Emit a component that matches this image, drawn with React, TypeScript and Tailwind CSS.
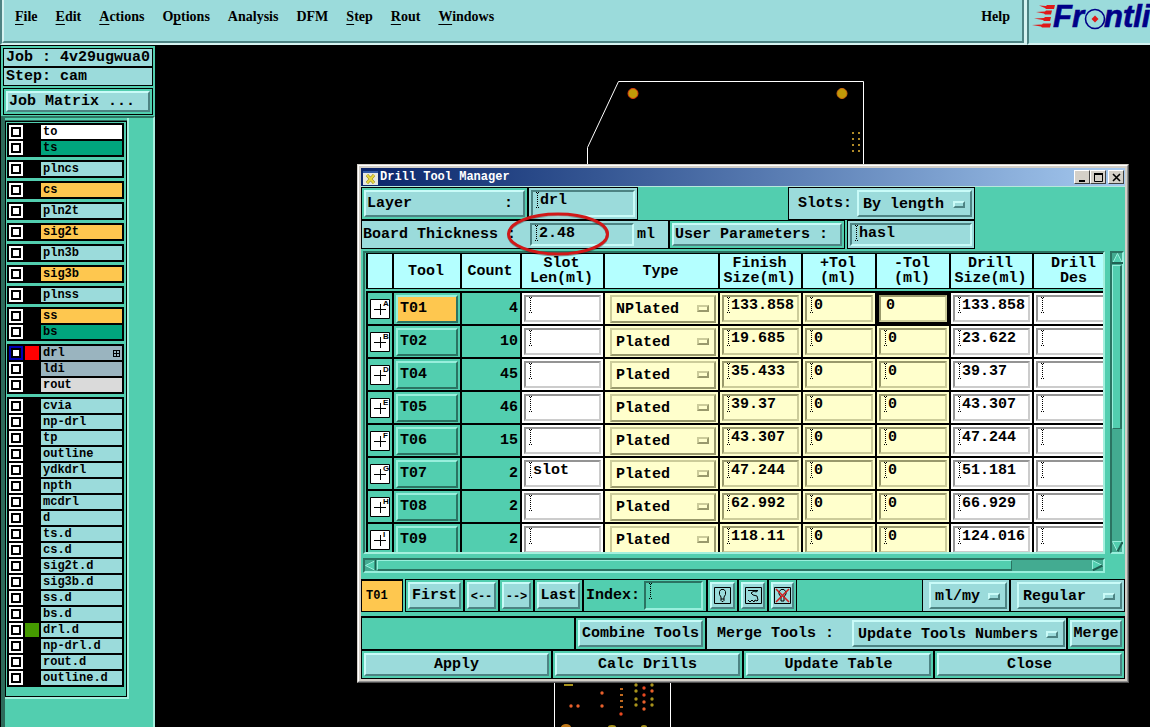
import React from "react";

const MONO = "font-['Liberation_Mono',monospace] font-bold";
const RAISED = "border-2 border-t-[#c9fbf8] border-l-[#c9fbf8] border-b-[#4d8383] border-r-[#4d8383] bg-[#9bdbdb]";
const RAISED_GREEN = "border-2 border-t-[#98efdc] border-l-[#98efdc] border-b-[#2b7362] border-r-[#2b7362] bg-[#52ceaf]";
const RAISED_YELLOW = "border-2 border-t-[#cccc9a] border-l-[#cccc9a] border-b-[#99996c] border-r-[#99996c] bg-[#ffffcc]";
const SUNK = "border-2 border-t-[#4d8383] border-l-[#4d8383] border-b-[#c9fbf8] border-r-[#c9fbf8] bg-[#9bdbdb]";
const SUNK_GREEN = "border-2 border-t-[#2b7362] border-l-[#2b7362] border-b-[#98efdc] border-r-[#98efdc] bg-[#52ceaf]";
const SUNK_WHITE = "border-2 border-t-[#949494] border-l-[#949494] border-b-[#cccccc] border-r-[#cccccc] bg-white";
const SUNK_YELLOW = "border-2 border-t-[#99996c] border-l-[#99996c] border-b-[#cccc9a] border-r-[#cccc9a] bg-[#ffffcc]";

type Layer = { name: string; bg: string; swatch?: string; active?: boolean };

const CYAN = "bg-[#9bdbdb]";
const ORANGE = "bg-[#fec74f]";
const GREEN = "bg-[#00a57d]";
const SLATE = "bg-[#9ab4bf]";

const layerGroups: Layer[][] = [
  [{ name: "to", bg: "bg-white" }, { name: "ts", bg: GREEN }],
  [{ name: "plncs", bg: CYAN }],
  [{ name: "cs", bg: ORANGE }],
  [{ name: "pln2t", bg: CYAN }],
  [{ name: "sig2t", bg: ORANGE }],
  [{ name: "pln3b", bg: CYAN }],
  [{ name: "sig3b", bg: ORANGE }],
  [{ name: "plnss", bg: CYAN }],
  [{ name: "ss", bg: ORANGE }, { name: "bs", bg: GREEN }],
  [
    { name: "drl", bg: SLATE, swatch: "bg-[#ff0000]", active: true },
    { name: "ldi", bg: SLATE },
    { name: "rout", bg: "bg-[#dadada]" },
  ],
  [
    "cvia", "np-drl", "tp", "outline", "ydkdrl", "npth", "mcdrl", "d", "ts.d", "cs.d", "sig2t.d",
    "sig3b.d", "ss.d", "bs.d", "drl.d", "np-drl.d", "rout.d", "outline.d",
  ].map((name) => ({ name, bg: CYAN, swatch: name === "drl.d" ? "bg-[#459a00]" : undefined })),
];

const menus: [string, string, string][] = [
  ["", "F", "ile"],
  ["", "E", "dit"],
  ["", "A", "ctions"],
  ["O", "p", "tions"],
  ["Analysis", "", ""],
  ["DFM", "", ""],
  ["", "S", "tep"],
  ["", "R", "out"],
  ["", "W", "indows"],
];

const tools = [
  { id: "T01", mark: "A", count: 4, slot: "", type: "NPlated", finish: "133.858", drill: "133.858" },
  { id: "T02", mark: "B", count: 10, slot: "", type: "Plated", finish: "19.685", drill: "23.622" },
  { id: "T04", mark: "D", count: 45, slot: "", type: "Plated", finish: "35.433", drill: "39.37" },
  { id: "T05", mark: "E", count: 46, slot: "", type: "Plated", finish: "39.37", drill: "43.307" },
  { id: "T06", mark: "F", count: 15, slot: "", type: "Plated", finish: "43.307", drill: "47.244" },
  { id: "T07", mark: "G", count: 2, slot: "slot", type: "Plated", finish: "47.244", drill: "51.181" },
  { id: "T08", mark: "H", count: 2, slot: "", type: "Plated", finish: "62.992", drill: "66.929" },
  { id: "T09", mark: "I", count: 2, slot: "", type: "Plated", finish: "118.11", drill: "124.016" },
];

const columns: [string, string][] = [
  ["", "w-[26px]"],
  ["Tool", "w-[68px]"],
  ["Count", "w-[60px]"],
  ["Slot\nLen(ml)", "w-[83px]"],
  ["Type", "w-[115px]"],
  ["Finish\nSize(ml)", "w-[83px]"],
  ["+Tol\n(ml)", "w-[74px]"],
  ["-Tol\n(ml)", "w-[74px]"],
  ["Drill\nSize(ml)", "w-[83px]"],
  ["Drill\nDes", "w-[83px]"],
];

function Caret() {
  return (
    <svg width="5" height="16" viewBox="0 0 5 16" className="shrink-0" aria-hidden="true" shapeRendering="crispEdges">
      <path d="M2.500 1V15" stroke="#000" strokeDasharray="1 1" />
      <path d="M1 0h1v1H1zM3 0h1v1H3zM1 15h1v1H1zM3 15h1v1H3z" />
    </svg>
  );
}

function Field({ label, value, look, caret = true, className = "" }: {
  label: string; value: string; look: string; caret?: boolean; className?: string;
}) {
  return (
    <div className={`flex min-w-0 items-start pl-[2px] ${look} ${className}`}>
      {caret ? <Caret /> : <span className="w-[3px] shrink-0" />}
      <input
        aria-label={label}
        defaultValue={value}
        className="h-[17px] w-full min-w-0 bg-transparent text-[15px] leading-[17px] outline-none"
      />
    </div>
  );
}

function Dropdown({ label, options, look, mark, className = "" }: {
  label: string; options: string[]; look: string; mark: string; className?: string;
}) {
  return (
    <div className={`grid items-center ${look} ${className}`}>
      <select
        aria-label={label}
        className="col-start-1 row-start-1 h-full w-full min-w-0 appearance-none bg-transparent pt-[2px] pl-1 text-[15px] outline-none"
      >
        {options.map((o) => <option key={o}>{o}</option>)}
      </select>
      <span className={`pointer-events-none col-start-1 row-start-1 mr-[5px] h-[7px] w-3 justify-self-end ${mark}`} />
    </div>
  );
}

const MARK_CYAN = "border-2 border-t-[#c9fbf8] border-l-[#c9fbf8] border-b-[#4d8383] border-r-[#4d8383]";
const MARK_YELLOW = "border-2 border-t-[#cccc9a] border-l-[#cccc9a] border-b-[#99996c] border-r-[#99996c]";

function Boxed({ className = "", children }: { className?: string; children?: React.ReactNode }) {
  return <div className={`flex border border-black bg-[#52ceaf] p-[2px] ${className}`}>{children}</div>;
}

function Btn({ children, className = "", label }: { children: React.ReactNode; className?: string; label?: string }) {
  return (
    <button type="button" aria-label={label} className={`flex min-w-0 flex-1 items-center justify-center pt-[2px] whitespace-pre ${RAISED} ${className}`}>
      {children}
    </button>
  );
}

function Logo() {
  return (
    <svg width="121" height="41" viewBox="1029 0 121 41" role="img" aria-label="Frontline">
      <g fill="#e01818">
        <path d="M1039 5.500l7 .5 1-1h8l-1 4h-8l-1-1z" />
        <path d="M1036 12l9-.5 1-1h6l-1 4h-6l-1-1z" />
        <path d="M1034 18.500l10-.5 1-1h6l-1 4h-6l-1-1z" />
        <path d="M1032 25l10-.5 1-1h8l-1 4h-8l-1-1z" />
      </g>
      <g fill="#000088" stroke="#000088" strokeWidth=".6" className="font-['Liberation_Sans',sans-serif] text-[31px] font-bold italic">
        <text x="1053" y="27">Fr</text>
        <text x="1104" y="27">ntli</text>
      </g>
      <circle cx="1095" cy="19" r="9.500" fill="none" stroke="#000088" strokeWidth="1.600" />
      <path d="M1095 15.500l3.500 3.500-3.500 3.500-3.500-3.500z" fill="#e01818" />
    </svg>
  );
}

function LayerRow({ layer }: { layer: Layer }) {
  return (
    <label className="flex h-[14px] gap-[2px]">
      <input
        type="checkbox"
        className={`size-[14px] shrink-0 appearance-none border-2 bg-white shadow-[inset_0_0_0_2px_#000] ${layer.active ? "border-[#0000b4]" : "border-white"}`}
      />
      <span className={`w-[14px] shrink-0 ${layer.swatch ?? "bg-black"}`} />
      <span className={`flex flex-1 items-center justify-between pr-[1px] pl-[2px] text-[12px] leading-[14px] ${layer.bg}`}>
        {layer.name}
        {layer.active && (
          <svg width="7" height="7" viewBox="0 0 7 7" className="mr-px" aria-hidden="true" shapeRendering="crispEdges">
            <path d="M0 0h7v7H0zM1 1v2h2V1zM4 1v2h2V1zM1 4v2h2V4zM4 4v2h2V4z" fillRule="evenodd" />
          </svg>
        )}
      </span>
    </label>
  );
}

function Sidebar() {
  return (
    <aside className={`flex w-[155px] shrink-0 flex-col border-l border-black bg-[#52ceaf] ${MONO}`}>
      <div className="border-t border-black px-[2px] pt-[2px] pb-[1px] text-[15px]">
        <div className="flex h-[19px] items-center border border-black bg-[#9bdbdb] pt-[2px] pl-[2px] whitespace-pre">Job : 4v29ugwua0</div>
        <div className="flex h-[19px] items-center border border-black bg-[#9bdbdb] pt-[2px] pl-[2px] whitespace-pre">Step: cam</div>
        <div className="mt-[2px] flex h-[27px] border border-black p-[2px]">
          <button type="button" className={`flex-1 pl-[1px] text-left leading-[18px] whitespace-pre ${RAISED}`}>Job Matrix ...</button>
        </div>
      </div>
      <div className="flex flex-1 border-t-2 border-r-2 border-l-4 border-t-[#2e7563] border-r-[#a5f0de] border-l-[#2e6b5b]">
        <div className="self-start border-r-2 border-b-2 border-[#a5f0de]">
          <div className="mt-[2px] border-t border-[#2e6b5b]">
            <div className="flex w-[122px] flex-col gap-[3px] border border-black pt-[1px] pr-[2px] pb-[9px] pl-[1px]">
              {layerGroups.map((group) => (
                <div key={group[0].name} className="flex flex-col gap-[2px] bg-black p-[2px]">
                  {group.map((layer) => <LayerRow key={layer.name} layer={layer} />)}
                </div>
              ))}
            </div>
          </div>
        </div>
      </div>
    </aside>
  );
}

const pads: [number, number, string][] = [
  [571, 706, "#e8602c"], [578, 706, "#e8602c"], [602, 693, "#e8602c"], [602, 706, "#e8602c"],
  [636, 685, "#a8931c"], [636, 691, "#a8931c"], [636, 699, "#a8931c"], [636, 705, "#a8931c"],
  [644, 688, "#e84820"], [644, 695, "#e84820"], [644, 702, "#e8602c"], [644, 709, "#e8602c"],
  [652, 685, "#a8931c"], [652, 691, "#e8602c"], [652, 699, "#a8931c"], [652, 705, "#a8931c"],
  [621, 714, "#e84820"],
];

function BoardDrawing() {
  return (
    <svg width="995" height="682" viewBox="155 45 995 682" className="absolute top-0 left-0" aria-hidden="true">
      <path d="M587.500 170V147.500L618.500 81.500H863.500V170M554.500 680V727M670.500 680V727" fill="none" stroke="#fff" />
      <circle cx="633" cy="93.500" r="5" fill="#c09a08" stroke="#e03a10" />
      <circle cx="842" cy="93.500" r="5" fill="#c09a08" stroke="#d06a10" />
      {[133, 139, 145, 151].map((y) => (
        <path key={y} d={`M852 ${y}h2M858 ${y}h2`} stroke="#b08a28" strokeWidth="2" />
      ))}
      {[689, 695, 701, 707].map((y) => <path key={y} d={`M620 ${y}h3`} stroke="#c06a20" strokeWidth="2" />)}
      {pads.map(([x, y, fill]) => <circle key={`${x}-${y}`} cx={x} cy={y} r="1.700" fill={fill} />)}
      <path d="M564 685h9" stroke="#a8931c" strokeWidth="2" />
      <ellipse cx="566" cy="727" rx="5" ry="3" fill="#c07818" />
      <ellipse cx="612" cy="727" rx="4" ry="2" fill="#a8931c" />
      <ellipse cx="644" cy="727" rx="3" ry="2" fill="#a8931c" />
    </svg>
  );
}

function ToolMark({ mark }: { mark: string }) {
  return (
    <svg width="20" height="20" viewBox="0 0 20 20" className="mx-auto" role="img" aria-label={`Symbol ${mark}`}>
      <path d="M.5.5h19v19H.5z" fill="#fff" stroke="#000" />
      <path d="M10.500 5v11M4 10.500h12" stroke="#000" />
      <text x="13" y="7" className="font-['Liberation_Sans',sans-serif] text-[8px] font-bold">{mark}</text>
    </svg>
  );
}

function ToolTable() {
  const cell = "h-[33px] border-t-2 border-l-2 border-black p-0";
  return (
    <table className="w-[749px] table-fixed border-separate border-spacing-0">
      <thead>
        <tr>
          {columns.map(([text, width], i) => (
            <th key={i} className={`p-0 pb-[2px] ${width}`}>
              <div className="flex h-9 items-center justify-center border-t border-b border-l-2 border-black bg-[#b4ffff] pr-[2px] text-[15px] leading-[15px] whitespace-pre">
                {text}
              </div>
            </th>
          ))}
        </tr>
      </thead>
      <tbody>
        {tools.map((t, i) => (
          <tr key={t.id}>
            <td className={cell}><ToolMark mark={t.mark} /></td>
            <td className={cell}>
              <button type="button" className={`mx-[2px] flex h-7 w-[62px] items-center pt-[2px] pl-[2px] ${RAISED_GREEN} ${i === 0 ? "bg-[#fec74f]!" : ""}`}>
                {t.id}
              </button>
            </td>
            <td className={`${cell} pt-[2px]! pr-[2px]! text-right`}>{t.count}</td>
            <td className={`${cell} bg-white`}>
              <Field label={`${t.id} slot length`} value={t.slot} look={SUNK_WHITE} className="mx-[2px] h-[27px]" />
            </td>
            <td className={`${cell} bg-[#ffffcc]`}>
              <Dropdown label={`${t.id} type`} options={[t.type]} look={RAISED_YELLOW} mark={MARK_YELLOW} className="mr-[2px] ml-[5px] h-7" />
            </td>
            <td className={`${cell} bg-[#ffffcc]`}>
              <Field label={`${t.id} finish size`} value={t.finish} look={SUNK_YELLOW} className="mx-[2px] h-[27px]" />
            </td>
            <td className={`${cell} bg-[#ffffcc]`}>
              <Field label={`${t.id} plus tolerance`} value="0" look={SUNK_YELLOW} className="mx-[2px] h-[27px]" />
            </td>
            <td className={`${cell} ${i === 0 ? "bg-black" : "bg-[#ffffcc]"}`}>
              <Field label={`${t.id} minus tolerance`} value="0" look={SUNK_YELLOW} caret={i !== 0} className="mx-[2px] h-[27px]" />
            </td>
            <td className={`${cell} bg-white`}>
              <Field label={`${t.id} drill size`} value={t.drill} look={SUNK_WHITE} className="mx-[2px] h-[27px]" />
            </td>
            <td className={`${cell} bg-white`}>
              <Field label={`${t.id} drill designation`} value="" look={SUNK_WHITE} className="mx-[2px] h-[27px]" />
            </td>
          </tr>
        ))}
      </tbody>
    </table>
  );
}

function Arrow({ points, shade }: { points: string; shade: string }) {
  return (
    <svg width="11" height="11" viewBox="0 0 11 11" className="shrink-0" aria-hidden="true">
      <polygon points={points} fill="#52ceaf" stroke="#98efdc" strokeWidth="1" />
      <path d={shade} stroke="#1f6152" strokeWidth="2" fill="none" />
    </svg>
  );
}

function TitleBar() {
  const btn = "flex h-[14px] w-[16px] items-center justify-center border border-t-white border-l-white border-r-[#404040] border-b-[#404040] bg-[#d4d0c8]";
  return (
    <div className="flex h-[18px] items-center bg-linear-to-r from-[#0a246a] to-[#a6caf0] pr-[1px] pl-[2px] text-white">
      <svg width="15" height="15" viewBox="0 0 15 15" aria-hidden="true">
        <path d="M0 1h15v14H0z" fill="#e8e8e0" />
        <path d="M0 1h15v2H0z" fill="#3058a8" />
        <path d="M4 5l7 8M11 5l-7 8" stroke="#8a7a18" strokeWidth="3" />
        <path d="M4 5l7 8M11 5l-7 8" stroke="#e8d840" strokeWidth="2" />
      </svg>
      <h1 className="flex-1 pl-[2px] text-[12px] leading-[18px]">Drill Tool Manager</h1>
      <button type="button" aria-label="Minimize" className={btn}>
        <svg width="9" height="9" viewBox="0 0 9 9"><path d="M1 7h6v2H1z" /></svg>
      </button>
      <button type="button" aria-label="Maximize" className={btn}>
        <svg width="9" height="9" viewBox="0 0 9 9"><path d="M.5 1v7.500h8V1M0 1h9" fill="none" stroke="#000" /><path d="M0 0h9v2H0z" /></svg>
      </button>
      <button type="button" aria-label="Close window" className={`${btn} ml-[2px]`}>
        <svg width="9" height="9" viewBox="0 0 9 9"><path d="M1 1l7 7M8 1L1 8" stroke="#000" strokeWidth="1.600" /></svg>
      </button>
    </div>
  );
}

function DrillDialog() {
  return (
    <section
      aria-label="Drill Tool Manager"
      className={`absolute top-[119px] right-[21px] left-[202px] min-w-[772px] border border-t-[#d4d0c8] border-l-[#d4d0c8] border-r-[#505050] border-b-[#505050] bg-[#d4d0c8] text-[15px] text-black ${MONO}`}
    >
      <div className="border border-t-white border-r-[#909090] border-b-[#909090] border-l-white p-[2px]">
        <TitleBar />
        <div className="border-t border-[#b8e8dc] bg-[#52ceaf]">
          <div className="flex h-[33px]">
            <Boxed className="w-[167px]">
              <Btn className="justify-between! pr-[10px] pl-[1px]"><span>Layer</span><span>:</span></Btn>
            </Boxed>
            <div className="flex w-[110px] border border-black bg-[#9bdbdb] p-[2px]">
              <Field label="Layer name" value="drl" look={SUNK} className="flex-1" />
            </div>
            <div className="mr-[150px] ml-auto flex w-[187px] items-center border border-black bg-[#9bdbdb] py-[2px] pr-[2px] pl-[9px]">
              <span className="flex-1 pt-[2px]">Slots:</span>
              <Dropdown label="Slots" options={["By length"]} look={RAISED} mark={MARK_CYAN} className="h-full w-[115px]" />
            </div>
          </div>
          <div className="flex h-[29px]">
            <div className="flex w-[308px] items-center border border-black bg-[#9bdbdb] py-[2px] pr-[12px] pl-[1px]">
              <label htmlFor="board-thickness" className="w-[167px] pt-[2px] whitespace-pre">Board Thickness :</label>
              <div className={`flex h-full w-[104px] items-start pl-[2px] ${SUNK}`}>
                <Caret />
                <input
                  id="board-thickness"
                  defaultValue="2.48"
                  className="h-[17px] w-full min-w-0 bg-transparent text-[15px] leading-[17px] outline-none"
                />
              </div>
              <span className="flex-1 pt-[2px] pl-[3px]">ml</span>
            </div>
            <Boxed className="w-[176px]"><Btn className="justify-start! pl-[1px]">User Parameters :</Btn></Boxed>
            <div className="mr-[150px] ml-auto flex w-[128px] border border-black bg-[#9bdbdb] p-[2px]">
              <Field label="User parameter" value="hasl" look={SUNK} className="flex-1" />
            </div>
          </div>

          <div className="mt-[2px] flex gap-[5px] pr-[1px] pl-[2px]">
            <div className="h-[303px] min-w-0 flex-1 overflow-hidden border-2 border-t-[#2b7362] border-r-[#a5f0de] border-b-[#a5f0de] border-l-[#2b7362] pl-[1px]">
              <ToolTable />
            </div>
            <div className="flex h-[303px] w-[14px] flex-col items-center border-2 border-t-[#2b7362] border-r-[#98efdc] border-b-[#98efdc] border-l-[#2b7362] bg-[#43ab91]">
              <Arrow points="5.5,0.5 10.500,10.500 0.500,10.500" shade="M0 10h11" />
              <div className="mt-[1px] h-[164px] w-full shrink-0 border border-r-2 border-t-[#98efdc] border-r-[#2b7362] border-b-[#2b7362] border-l-[#98efdc] bg-[#52ceaf]" />
              <div className="flex-1" />
              <Arrow points="0.5,0.500 10.500,0.500 5.500,10.500" shade="M10.500 1L5.500 10.500" />
            </div>
          </div>

          <div className="mt-1 pr-[20px] pl-[2px]">
            <div className="flex h-[15px] items-center border-2 border-t-[#2b7362] border-r-[#98efdc] border-b-[#98efdc] border-l-[#2b7362] bg-[#43ab91]">
              <Arrow points="10.5,0.500 10.500,10.500 0.500,5.500" shade="M10.500 0V10.500" />
              <div className="ml-[1px] h-full w-[86%] border border-b-2 border-t-[#98efdc] border-r-[#2b7362] border-b-[#2b7362] border-l-[#98efdc] bg-[#52ceaf]" />
              <div className="flex-1" />
              <Arrow points="0.5,0.500 10.500,5.500 0.500,10.500" shade="M0.500 10.500L10.500 5.500" />
            </div>
          </div>

          <div className="mt-[6px] flex h-[33px]">
            <div className="mr-[2px] flex w-[42px] items-center border border-t-2 border-black bg-[#fec74f] pl-[4px] text-[12px]">T01</div>
            <Boxed className="w-[59px]"><Btn>First</Btn></Boxed>
            <Boxed className="w-[35px]"><Btn label="Previous" className="text-[12px]">&lt;--</Btn></Boxed>
            <Boxed className="w-[35px]"><Btn label="Next" className="text-[12px]">--&gt;</Btn></Boxed>
            <Boxed className="w-[49px]"><Btn>Last</Btn></Boxed>
            <div className="flex w-[124px] items-center border border-black py-[1px] pr-[3px] pl-[2px]">
              <span className="w-[58px] pt-[2px]">Index:</span>
              <Field label="Index" value="" look={SUNK_GREEN} className="h-full flex-1" />
            </div>
            <Boxed className="w-[31px]">
              <Btn label="Highlight" className="pt-0!">
                <svg width="17" height="17" viewBox="0 0 17 17" fill="none" stroke="#000" className="shrink-0">
                  <path d="M.5.5h16v16H.5z" />
                  <path d="M7 12V10L5.500 7.500V4.500L7 2.500h3l1.500 2v3L10 10v2zM7 12v1.500l1 1h1l1-1V12" />
                </svg>
              </Btn>
            </Boxed>
            <Boxed className="w-[30px]">
              <Btn label="Path" className="pt-0!">
                <svg width="17" height="17" viewBox="0 0 17 17" fill="none" stroke="#000" className="shrink-0">
                  <path d="M.5.5h16v16H.5z" />
                  <path d="M3 3.500h10L11 5l-2-1-3 2 2 2 4 1 1 4-1 1-2-1-1 2-2-2-2 2-2-2" />
                </svg>
              </Btn>
            </Boxed>
            <Boxed className="w-[29px]">
              <Btn label="Clear highlight" className="pt-0!">
                <svg width="17" height="17" viewBox="0 0 17 17" fill="none" stroke="#000" className="shrink-0">
                  <path d="M.5.5h16v16H.5z" />
                  <path d="M7 12V10L5 7V5l2-2.500h3L12 5v2l-2 3v4H7z" />
                  <path d="M2 2l13 13M15 2L2 15" stroke="#d02020" strokeWidth="1.600" />
                </svg>
              </Btn>
            </Boxed>
            <div className="min-w-0 flex-1 border-t border-b border-black" />
            <div className="w-[88px] border border-black bg-[#9bdbdb] py-[2px] pr-[2px] pl-[6px]">
              <Dropdown label="Units" options={["ml/my"]} look={RAISED} mark={MARK_CYAN} className="h-full" />
            </div>
            <div className="w-[115px] border border-black bg-[#9bdbdb] py-[2px] pr-[2px] pl-[6px]">
              <Dropdown label="Mode" options={["Regular"]} look={RAISED} mark={MARK_CYAN} className="h-full" />
            </div>
          </div>

          <div className="mt-1 flex h-[34px] border-t border-black">
            <div className="min-w-0 flex-1 border border-black" />
            <Boxed className="w-[131px]"><Btn>Combine Tools</Btn></Boxed>
            <div className="flex w-[361px] items-center border border-black bg-[#9bdbdb] py-[2px] pr-[1px] pl-[10px]">
              <span className="flex-1 pt-[2px] whitespace-pre">Merge Tools :</span>
              <Dropdown label="Merge Tools" options={["Update Tools Numbers"]} look={RAISED} mark={MARK_CYAN} className="h-full w-[213px]" />
            </div>
            <Boxed className="w-[58px]"><Btn>Merge</Btn></Boxed>
          </div>
          <div className="flex h-[29px]">
            {["Apply", "Calc Drills", "Update Table", "Close"].map((text) => (
              <Boxed key={text} className="flex-1"><Btn>{text}</Btn></Boxed>
            ))}
          </div>
        </div>
      </div>
      <svg width="104" height="46" viewBox="0 0 104 46" className="pointer-events-none absolute top-[46px] left-[148px]" aria-hidden="true">
        <ellipse cx="52" cy="24" rx="49.500" ry="20" fill="none" stroke="#000" strokeOpacity="0.300" strokeWidth="3" />
        <ellipse cx="52" cy="23" rx="49.500" ry="20" fill="none" stroke="#d01818" strokeWidth="3" />
      </svg>
    </section>
  );
}

export default function App() {
  return (
    <div className="flex h-screen min-h-[727px] flex-col overflow-hidden bg-black text-black">
      <header className="flex h-[45px] shrink-0">
        <div className="flex min-w-0 flex-1 border-r-[3px] border-b-2 border-l-2 border-r-[#d5f3f1] border-b-[#d5f3f1] border-l-[#4d8383]">
          <nav className="flex flex-1 items-start gap-[18px] border-r-2 border-b-2 border-l-2 border-r-[#4d8383] border-b-[#4d8383] border-l-[#d5f3f1] bg-[#9bdbdb] pt-[7px] pr-3 pl-[11px] font-['Liberation_Serif',serif] text-[14px] leading-5 font-bold">
            {menus.map(([before, key, after]) => (
              <a key={before + key + after} href="#menu">
                {before}
                {key && <span className="underline decoration-1 underline-offset-3">{key}</span>}
                {after}
              </a>
            ))}
            <a href="#help" className="ml-auto">Help</a>
          </nav>
        </div>
        <div className="w-[123px] shrink-0 overflow-hidden border-b-2 border-l-2 border-b-[#d5f3f1] border-l-[#4d8383] bg-[#9bdbdb]">
          <Logo />
        </div>
      </header>
      <div className="flex min-h-0 flex-1">
        <Sidebar />
        <main className="relative min-w-0 flex-1 overflow-hidden bg-black">
          <BoardDrawing />
          <DrillDialog />
        </main>
      </div>
    </div>
  );
}
